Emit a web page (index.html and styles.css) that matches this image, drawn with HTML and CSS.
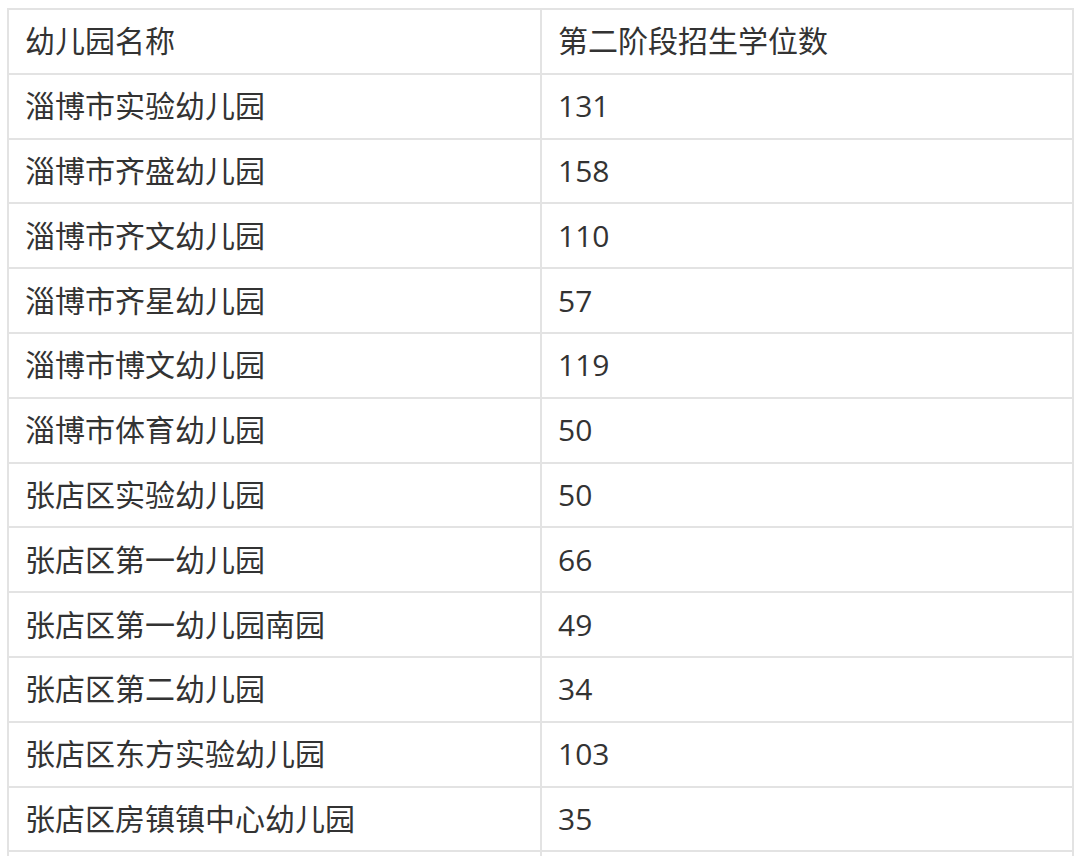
FILE: index.html
```html
<!DOCTYPE html>
<html lang="zh-CN">
<head>
<meta charset="utf-8">
<link rel="stylesheet" href="styles.css">
</head>
<body>
<table class="grid">
  <tbody>
    <tr><td class="name">幼儿园名称</td><td class="num">第二阶段招生学位数</td></tr>
    <tr><td class="name">淄博市实验幼儿园</td><td class="num">131</td></tr>
    <tr><td class="name">淄博市齐盛幼儿园</td><td class="num">158</td></tr>
    <tr><td class="name">淄博市齐文幼儿园</td><td class="num">110</td></tr>
    <tr><td class="name">淄博市齐星幼儿园</td><td class="num">57</td></tr>
    <tr><td class="name">淄博市博文幼儿园</td><td class="num">119</td></tr>
    <tr><td class="name">淄博市体育幼儿园</td><td class="num">50</td></tr>
    <tr><td class="name">张店区实验幼儿园</td><td class="num">50</td></tr>
    <tr><td class="name">张店区第一幼儿园</td><td class="num">66</td></tr>
    <tr><td class="name">张店区第一幼儿园南园</td><td class="num">49</td></tr>
    <tr><td class="name">张店区第二幼儿园</td><td class="num">34</td></tr>
    <tr><td class="name">张店区东方实验幼儿园</td><td class="num">103</td></tr>
    <tr><td class="name">张店区房镇镇中心幼儿园</td><td class="num">35</td></tr>
    <tr class="partial"><td class="name"></td><td class="num"></td></tr>
  </tbody>
</table>
</body>
</html>
```

FILE: styles.css
```css
html, body {
  margin: 0;
  padding: 0;
  background: #ffffff;
  overflow: hidden;
}
body {
  height: 856px;
  font-family: "Open Sans", "Noto Sans CJK SC", sans-serif;
  color: #333333;
}
.grid {
  margin: 8px 0 0 7px;
  border-collapse: separate;
  border-spacing: 0;
  border-top: 2px solid #e3e3e3;
  border-left: 2px solid #e3e3e3;
  table-layout: fixed;
}
.grid td {
  border-right: 2px solid #e3e3e3;
  border-bottom: 2px solid #e3e3e3;
  height: 62.8px;
  padding: 0 0 0 16px;
  font-size: 30px;
  line-height: 1;
  vertical-align: middle;
  white-space: nowrap;
  box-sizing: content-box;
}
.grid td.name {
  width: 515px;
}
.grid td.num {
  width: 514px;
}
```
